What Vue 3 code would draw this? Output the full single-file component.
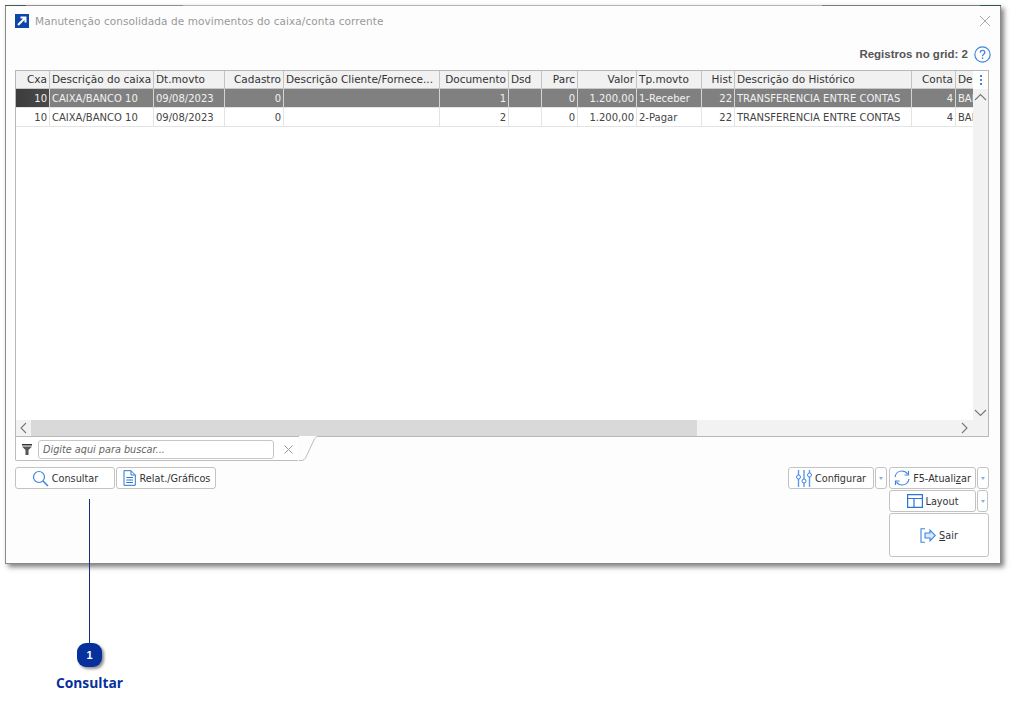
<script setup>
const cols = [
  { t: 'Cxa', w: 34, r: 1 }, { t: 'Descrição do caixa', w: 104 }, { t: 'Dt.movto', w: 71 },
  { t: 'Cadastro', w: 59, r: 1 }, { t: 'Descrição Cliente/Fornece...', w: 156 }, { t: 'Documento', w: 69, r: 1 },
  { t: 'Dsd', w: 33 }, { t: 'Parc', w: 36, r: 1 }, { t: 'Valor', w: 59, r: 1 }, { t: 'Tp.movto', w: 65 },
  { t: 'Hist', w: 33, r: 1 }, { t: 'Descrição do Histórico', w: 177 }, { t: 'Conta', w: 44, r: 1 }, { t: 'De', w: 40 },
]
const rows = [
  ['10', 'CAIXA/BANCO 10', '09/08/2023', '0', '', '1', '', '0', '1.200,00', '1-Receber', '22', 'TRANSFERENCIA ENTRE CONTAS', '4', 'BANCO'],
  ['10', 'CAIXA/BANCO 10', '09/08/2023', '0', '', '2', '', '0', '1.200,00', '2-Pagar', '22', 'TRANSFERENCIA ENTRE CONTAS', '4', 'BANCO'],
]
</script>

<template>
  <div class="page">
    <section class="win">
      <header class="title">
        <svg class="appicon" width="14" height="14" viewBox="0 0 14 14"><rect width="14" height="14" fill="#0b46a8"/><path d="M3 11 10 4M5.500 3.500H10.500V8.500" fill="none" stroke="#fff" stroke-width="2"/></svg>
        <span class="title-text">Manutenção consolidada de movimentos do caixa/conta corrente</span>
        <svg class="close" width="12" height="12" viewBox="0 0 12 12"><path d="M1 1 11 11M11 1 1 11" stroke="#a8a8a8" stroke-width="1" fill="none"/></svg>
      </header>
      <div class="info">
        <b>Registros no grid: 2</b>
        <svg width="17" height="17" viewBox="0 0 16 16"><circle cx="8" cy="8" r="7.200" fill="none" stroke="#3f86dc" stroke-width="1.100"/><path d="M5.900 6.200C6 4.800 7 4.200 8 4.200c1.300 0 2.200.8 2.200 1.900 0 1.700-2.200 1.700-2.200 3.500" fill="none" stroke="#3f86dc" stroke-width="1.200"/><rect x="7.400" y="10.800" width="1.300" height="1.400" fill="#3f86dc"/></svg>
      </div>

      <div class="grid-box">
        <div class="grid-area">
          <div class="table">
            <div class="tr head">
              <div v-for="c in cols" :key="c.t" class="td" :class="{ right: c.r }" :style="{ width: c.w + 'px' }">{{ c.t }}</div>
            </div>
            <div v-for="(row, i) in rows" :key="i" class="tr body" :class="{ sel: i === 0 }">
              <div v-for="(v, j) in row" :key="j" class="td" :class="{ right: cols[j].r, ind: i === 0 && j === 0 }" :style="{ width: cols[j].w + 'px' }">{{ v }}</div>
            </div>
          </div>
          <div class="vbar">
            <div class="menu"><i></i><i></i><i></i></div>
            <div class="arrow"><svg width="13" height="8" viewBox="0 0 13 8"><path d="M1 7 6.500 1.500 12 7" fill="none" stroke="#777" stroke-width="1.100"/></svg></div>
            <div class="arrow low"><svg width="13" height="8" viewBox="0 0 13 8"><path d="M1 1 6.500 6.500 12 1" fill="none" stroke="#777" stroke-width="1.100"/></svg></div>
          </div>
        </div>
        <div class="hbar">
          <div class="harrow"><svg width="7" height="12" viewBox="0 0 7 12"><path d="M6 1 1 6 6 11" fill="none" stroke="#777" stroke-width="1.100"/></svg></div>
          <div class="thumb"></div>
          <div class="hfill"></div>
          <div class="harrow end"><svg width="7" height="12" viewBox="0 0 7 12"><path d="M1 1 6 6 1 11" fill="none" stroke="#777" stroke-width="1.100"/></svg></div>
          <div class="corner"></div>
        </div>
      </div>

      <div class="filter">
        <div class="tab">
          <svg class="funnel" width="10" height="11" viewBox="0 0 10 11"><path d="M0 0H10V1.500H0Z" fill="#333"/><path d="M0 2.500H10L6.500 6V11H3.500V6Z" fill="#555"/></svg>
          <div class="search">Digite aqui para buscar...</div>
          <svg class="clear" width="9" height="9" viewBox="0 0 9 9"><path d="M.500.500 8.500 8.500M8.500.500.500 8.500" stroke="#999" fill="none"/></svg>
          <svg class="slant" width="19" height="25" viewBox="0 0 19 25"><path d="M0 24.500H2C5 24.500 6 23 7 21L15 4C16 2 17 .500 19 .500" fill="none" stroke="#bdbdbd"/></svg>
        </div>
      </div>

      <div class="actions">
        <div class="left-actions">
          <button class="btn consult">
            <svg width="17" height="17" viewBox="0 0 17 17"><circle cx="7" cy="7" r="5.500" fill="none" stroke="#3d86e0" stroke-width="1.200"/><path d="M11 11 16 16" stroke="#3d86e0" stroke-width="1.500"/></svg>
            Consultar
          </button>
          <button class="btn relat">
            <svg width="13" height="16" viewBox="0 0 13 16"><path d="M1 .700H8L12.300 5V15.300H1ZM8 .700V5H12.300M3.300 7.500H10M3.300 10H10M3.300 12.500H10" fill="none" stroke="#2c74d4" stroke-width="1"/></svg>
            Relat./Gráficos
          </button>
        </div>
        <div class="right-actions">
          <div class="line l1">
            <button class="btn config">
              <svg width="16" height="17" viewBox="0 0 16 17"><path d="M2.500 0V5M2.500 9V17M8 0V9M8 13V17M13.500 0V3M13.500 7V17" stroke="#5b9bea" stroke-width="1.400"/><circle cx="2.500" cy="7" r="2" fill="none" stroke="#3d86e0"/><circle cx="8" cy="11" r="2" fill="none" stroke="#3d86e0"/><circle cx="13.500" cy="5" r="2" fill="none" stroke="#3d86e0"/></svg>
              Configurar
            </button>
            <button class="btn drop"><span class="caret"></span></button>
            <button class="btn main">
              <svg width="16" height="16" viewBox="0 0 16 16"><path d="M1 7C1.500 3.500 4.500 1 8 1c2.500 0 4.300 1.200 5.500 3M15 9c-.500 3.500-3.500 6-7 6-2.500 0-4.300-1.200-5.500-3" fill="none" stroke="#3d86e0" stroke-width="1.200"/><path d="M14.500 1V5H10.500M1.500 15V11H5.500" fill="none" stroke="#3d86e0" stroke-width="1.200"/></svg>
              <span>F5-Atuali<u>z</u>ar</span>
            </button>
            <button class="btn drop"><span class="caret"></span></button>
          </div>
          <div class="line l2">
            <button class="btn main">
              <svg width="16" height="14" viewBox="0 0 16 14"><path d="M.600.600H15.400V13.400H.600ZM.600 4.500H15.400M7 4.500V13.400" fill="none" stroke="#2c74d4" stroke-width="1.200"/></svg>
              Layout
            </button>
            <button class="btn drop thin"><span class="caret"></span></button>
          </div>
          <button class="btn exit">
            <svg width="16" height="15" viewBox="0 0 16 15"><path d="M5 .700H1V14.300H5" fill="none" stroke="#3d86e0" stroke-width="1.100"/><path d="M5 5H10V2L15.300 7.500 10 13V10H5Z" fill="#dbe9fa" stroke="#3d86e0" stroke-width="1.100"/></svg>
            <span><u>S</u>air</span>
          </button>
        </div>
      </div>
      <span class="leader"></span>
    </section>

    <div class="callout">
      <div class="badge">1</div>
      <div class="callout-label">Consultar</div>
    </div>
  </div>
</template>

<style scoped>
.page { width: 1024px; height: 709px; box-sizing: border-box; padding: 5px 0 0 5px; overflow: hidden; background: #fff; font-family: "DejaVu Sans", Verdana, sans-serif; font-size: 10px; color: #333; }
.win { position: relative; width: 996px; height: 559px; box-sizing: border-box; padding: 0 11px 0 9px; background: #fdfdfd; border: 1px solid #8a8a8a; border-top-color: #b5b5b5; box-shadow: 3px 3px 5px rgba(0,0,0,.5); }
.win::before { content: ""; position: absolute; left: -1px; right: -1px; top: -1px; height: 1px; background: linear-gradient(90deg, #3f5f50 0 21px, #8f8f8f 21px 178px, #b5b5b5 178px 817px, #7d7d7d 817px 975px, #2f5a48 975px); }
.title { height: 29px; display: flex; align-items: center; gap: 6px; }
.appicon { flex: none; }
.title-text { color: #999; font-size: 10.500px; letter-spacing: .08px; }
.close { margin-left: auto; margin-right: -2px; }
.info { height: 35px; box-sizing: border-box; padding-top: 3px; display: flex; align-items: center; justify-content: flex-end; gap: 6px; }
.info b { font-family: "Liberation Sans", Arial, sans-serif; font-size: 11.500px; color: #555; }
.info svg { margin-right: -2px; }
.grid-box { width: 974px; height: 367px; box-sizing: border-box; border: 1px solid #b8b8b8; background: #fff; display: flex; flex-direction: column; }
.grid-area { position: relative; flex: 1; min-height: 0; overflow: hidden; }
.table { width: 957px; overflow: hidden; }
.tr { display: flex; width: 957px; }
.td { flex: none; box-sizing: border-box; padding: 0 2px; white-space: nowrap; overflow: hidden; border-right: 1px solid #e4e4e4; border-bottom: 1px solid #e4e4e4; }
.right { text-align: right; }
.head { height: 18px; background: #f1f1f1; color: #333; font-size: 10.500px; }
.head .td { line-height: 17px; border-right-color: #c4c4c4; border-bottom-color: #c8c8c8; }
.body { height: 19px; color: #444; }
.body .td { line-height: 20px; }
.sel { height: 19px; background: #808080; color: #f2f2f2; }
.sel .td { border-right-color: #d4d4d4; border-bottom-color: #e4e4e4; }
.sel .ind { background: linear-gradient(90deg, #3c3c3c, #4a4a4a); }
.vbar { position: absolute; top: 0; right: 0; width: 15px; height: 100%; background: #f2f2f2; display: flex; flex-direction: column; align-items: center; }
.menu { width: 15px; height: 18px; background: #fff; display: flex; flex-direction: column; align-items: center; justify-content: center; gap: 2px; }
.menu i { width: 2px; height: 2px; background: #3f86dc; }
.arrow { height: 16px; display: flex; align-items: center; justify-content: center; }
.low { margin-top: auto; height: 15px; }
.hbar { height: 16px; flex: none; display: flex; background: #f2f2f2; }
.harrow { width: 15px; display: flex; align-items: center; justify-content: center; }
.thumb { width: 666px; background: #d9d9d9; }
.hfill { flex: 1; }
.end { width: 18px; }
.corner { width: 15px; background: #f2f2f2; }
.filter { height: 25px; }
.tab { position: relative; width: 283px; height: 24px; box-sizing: border-box; padding: 2px 0 0 6px; display: flex; align-items: center; border: 1px solid #bdbdbd; border-top: 0; border-right: 0; border-radius: 0 0 0 2px; background: #fff; }
.funnel { flex: none; }
.search { width: 236px; height: 19px; box-sizing: border-box; margin-left: 6px; padding-left: 4px; border: 1px solid #c6c6c6; border-radius: 3px; background: #fff; color: #666; font-style: italic; font-size: 9.700px; line-height: 17px; }
.clear { margin-left: 10px; }
.slant { position: absolute; left: 283px; top: -1px; background: #fdfdfd; }
.actions { display: flex; justify-content: space-between; align-items: flex-start; padding-top: 5px; }
.left-actions { display: flex; gap: 1px; }
.btn { box-sizing: border-box; height: 22px; padding: 0; display: flex; align-items: center; justify-content: center; gap: 3px; border: 1px solid #c3c3c3; border-radius: 3px; background: #fff; color: #333; font: inherit; font-size: 9.700px; }
.consult { width: 100px; gap: 3px; }
.relat { width: 100px; gap: 4px; padding-left: 1px; }
.right-actions { width: 201px; display: flex; flex-direction: column; align-items: flex-end; gap: 1px; }
.line { display: flex; gap: 1px; }
.config { width: 86px; gap: 3px; }
.main { width: 87px; }
.drop { width: 12px; margin-right: 1px; }
.line .drop:last-child { margin-right: 0; }
.thin { width: 11px; margin-right: 1px !important; }
.caret { width: 0; height: 0; border: 2.500px solid transparent; border-top: 3px solid #8bb1e3; border-bottom: 0; }
.exit { width: 100px; height: 44px; }
.leader { position: absolute; left: 83px; top: 493px; width: 1px; height: 66px; background: #1b2f7a; }
.callout { width: 169px; margin-top: 79px; display: flex; flex-direction: column; align-items: center; position: relative; }
.callout::before { content: ""; position: absolute; left: 84px; top: -79px; width: 1px; height: 79px; background: #1b2f7a; }
.badge { position: relative; width: 25px; height: 24px; border-radius: 9px; background: #06309b; color: #fff; font: bold 11px/24px "Liberation Sans", Arial, sans-serif; text-align: center; box-shadow: 2px 2px 3px rgba(0,0,0,.45); }
.callout-label { margin-top: 7px; color: #06309b; font: bold 13.800px/18px "Open Sans", "Liberation Sans", sans-serif; }
</style>

<style>
html, body { margin: 0; background: #fff; }
</style>
